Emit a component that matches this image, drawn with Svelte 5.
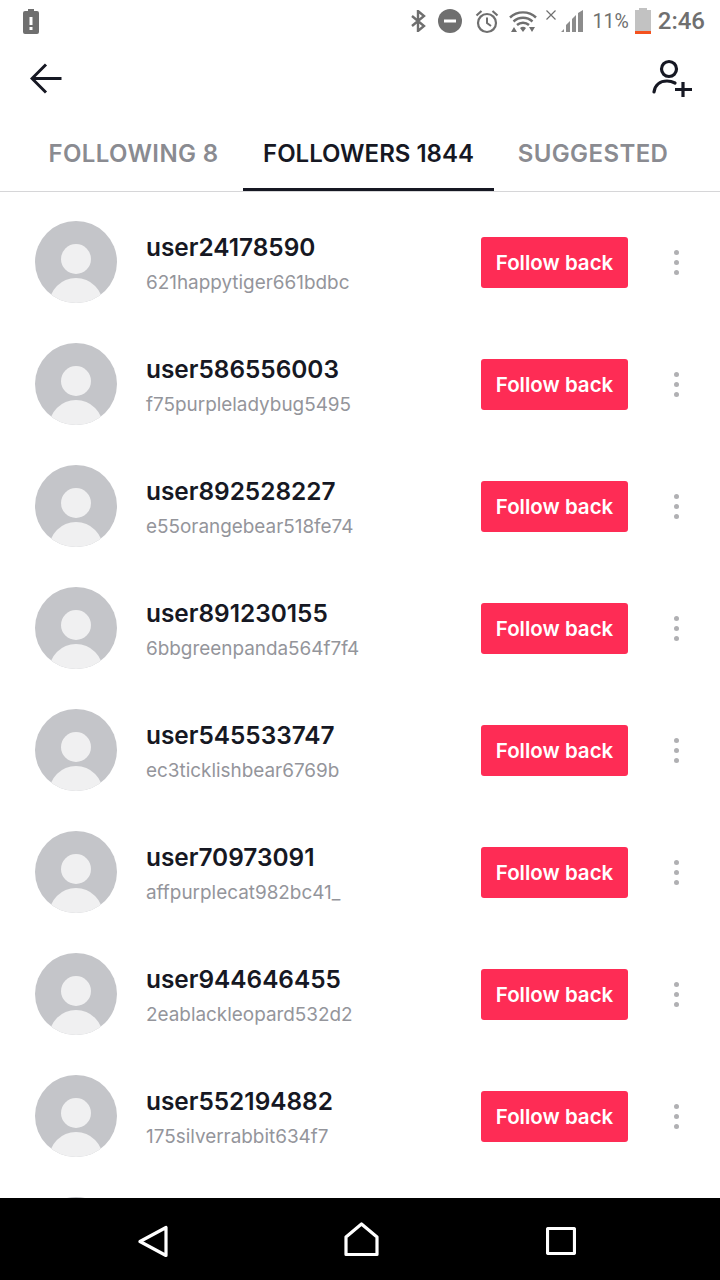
<script>
  const followers = [
    { name: 'user24178590', handle: '621happytiger661bdbc' },
    { name: 'user586556003', handle: 'f75purpleladybug5495' },
    { name: 'user892528227', handle: 'e55orangebear518fe74' },
    { name: 'user891230155', handle: '6bbgreenpanda564f7f4' },
    { name: 'user545533747', handle: 'ec3ticklishbear6769b' },
    { name: 'user70973091', handle: 'affpurplecat982bc41_' },
    { name: 'user944646455', handle: '2eablackleopard532d2' },
    { name: 'user552194882', handle: '175silverrabbit634f7' },
    {} // next row, only the top of its avatar shows above the nav bar
  ];
</script>

<div class="page">
  <div class="status">
    <svg class="alert" width="16" height="26" viewBox="0 0 16 26">
      <path d="M5 1h6v2h3a2 2 0 0 1 2 2v19a2 2 0 0 1-2 2H2a2 2 0 0 1-2-2V5a2 2 0 0 1 2-2h3z" fill="#6f6f6f"/>
      <rect x="6.500" y="9" width="3" height="8" fill="#fff"/>
      <rect x="6.500" y="19" width="3" height="3" fill="#fff"/>
    </svg>
    <div class="status-right">
      <svg class="bt" width="16" height="22" viewBox="0 0 16 22">
        <path d="M2 6l12 10-6 5V1l6 5L2 16" fill="none" stroke="#6f6f6f" stroke-width="2.400"/>
      </svg>
      <svg class="dnd" width="24" height="24" viewBox="0 0 24 24">
        <circle cx="12" cy="12" r="12" fill="#6f6f6f"/>
        <rect x="6" y="10.500" width="12" height="3" fill="#fff"/>
      </svg>
      <svg class="alarm" width="24" height="25" viewBox="0 0 24 25">
        <circle cx="12" cy="14" r="9" fill="none" stroke="#6f6f6f" stroke-width="2.200"/>
        <path d="M12 8.500V14l4 3" fill="none" stroke="#6f6f6f" stroke-width="2"/>
        <path d="M1.500 6.500L6.500 2M22.500 6.500L17.500 2" fill="none" stroke="#6f6f6f" stroke-width="2.200"/>
      </svg>
      <svg class="wifi" width="28" height="23" viewBox="0 0 28 23">
        <path d="M1 7.500a19 19 0 0 1 26 0M4.500 11.500a14 14 0 0 1 19 0M8 15a9 9 0 0 1 12 0" fill="none" stroke="#6f6f6f" stroke-width="2.400"/>
        <path d="M11 18a4.500 4.500 0 0 1 6 0l-3 4z" fill="#6f6f6f"/>
        <path d="M2 22l3-5 3 5zM20 17h6l-3 5z" fill="#6f6f6f"/>
      </svg>
      <div class="signal-group">
        <svg class="cross" width="10" height="10" viewBox="0 0 10 10">
          <path d="M.5.5l9 9M9.500.5l-9 9" stroke="#6f6f6f" stroke-width="1.200"/>
        </svg>
        <svg class="signal" width="23" height="22" viewBox="0 0 23 22">
          <path d="M0 22l3-3v3zM5 22v-7l4-4v11zM11 22V9l4-4v17zM17 22V3l5-3v22z" fill="#8c8c8c"/>
        </svg>
      </div>
      <span class="percent">11%</span>
      <svg class="battery" width="16" height="26" viewBox="0 0 16 26">
        <path d="M4 0h8v2h4v21H0V2h4z" fill="#c2c2c2"/>
        <rect y="23" width="16" height="3" fill="#f4511e"/>
      </svg>
      <span class="time">2:46</span>
    </div>
  </div>

  <div class="toolbar">
    <svg width="32" height="31" viewBox="0 0 32 31">
      <path d="M31.500 15.500H2M16 1.500L2 15.500l14 14" fill="none" stroke="#161823" stroke-width="3"/>
    </svg>
    <svg width="41" height="38" viewBox="0 0 41 38">
      <circle cx="17" cy="10" r="7.500" fill="none" stroke="#161823" stroke-width="3.200"/>
      <path d="M2 33c1-7 6-11 13-11 3 0 6 1 8 2" fill="none" stroke="#161823" stroke-width="3.200" stroke-linecap="round"/>
      <path d="M31 23v15M23 30.500h17" fill="none" stroke="#161823" stroke-width="3.200"/>
    </svg>
  </div>

  <div class="tabs">
    <div class="tab first">FOLLOWING 8</div>
    <div class="tab active">FOLLOWERS 1844</div>
    <div class="tab last">SUGGESTED</div>
  </div>

  <div class="list">
    {#each followers as f}
      <div class="row">
        <svg class="avatar" width="82" height="82" viewBox="0 0 82 82">
          <defs>
            <clipPath id="avatar-clip"><circle cx="41" cy="41" r="41"/></clipPath>
          </defs>
          <circle cx="41" cy="41" r="41" fill="#c4c5c9"/>
          <circle cx="41" cy="38" r="15" fill="#f0f0f1"/>
          <circle cx="41" cy="84" r="27" fill="#f0f0f1" clip-path="url(#avatar-clip)"/>
        </svg>
        {#if f.name}
          <div class="info">
            <div class="name">{f.name}</div>
            <div class="handle">{f.handle}</div>
          </div>
          <button class="follow">Follow back</button>
          <div class="more"><i></i><i></i><i></i></div>
        {/if}
      </div>
    {/each}
  </div>

  <div class="nav">
    <svg width="30" height="33" viewBox="0 0 30 33">
      <path d="M28 2.500v28L2 16.500z" fill="none" stroke="#fff" stroke-width="3.200" stroke-linejoin="round"/>
    </svg>
    <svg class="home" width="35" height="35" viewBox="0 0 35 35">
      <path d="M2 32.500V15L17.500 2 33 15v17.500z" fill="none" stroke="#fff" stroke-width="3.200" stroke-linejoin="round"/>
    </svg>
    <svg class="square" width="30" height="28" viewBox="0 0 30 28">
      <rect x="1.500" y="1.500" width="27" height="25" rx="1" fill="none" stroke="#fff" stroke-width="3.200"/>
    </svg>
  </div>
</div>

<style>
  :global(body) {
    background: #fff;
  }

  .page {
    width: 720px;
    height: 1280px;
    display: flex;
    flex-direction: column;
    overflow: hidden;
    background: #fff;
    font-family: 'Inter', 'Liberation Sans', sans-serif;
    color: #161823;
  }

  .status {
    height: 40px;
    flex: none;
    box-sizing: border-box;
    padding: 2px 15px 0 23px;
    display: flex;
    align-items: center;
    justify-content: space-between;
  }

  .status-right {
    display: flex;
    align-items: center;
  }

  .bt { margin-right: 12px; }
  .dnd { margin-right: 13px; }
  .alarm { margin-right: 10px; }
  .wifi { margin-right: 9px; }

  .signal-group {
    display: flex;
    align-items: flex-start;
    gap: 5px;
    margin-right: 9px;
  }

  .percent {
    font-family: 'Roboto', sans-serif;
    font-size: 19.500px;
    color: #6f6f6f;
    margin-right: 6px;
  }

  .time {
    font-family: 'Roboto', sans-serif;
    font-size: 24px;
    font-weight: 500;
    color: #6f6f6f;
    margin-left: 7px;
  }

  .toolbar {
    height: 75px;
    flex: none;
    display: flex;
    align-items: center;
    justify-content: space-between;
    padding: 1px 27px 0 30px;
    box-sizing: border-box;
  }

  .tabs {
    height: 77px;
    flex: none;
    box-sizing: border-box;
    display: flex;
    justify-content: center;
    border-bottom: 1px solid #d6d6d8;
  }

  .tab {
    height: 76px;
    box-sizing: border-box;
    display: flex;
    align-items: center;
    justify-content: center;
    font-size: 24px;
    font-weight: 600;
    color: #8a8b91;
    letter-spacing: 0.4px;
    white-space: nowrap;
  }

  .tab.first { width: 243px; padding-left: 24px; }
  .tab.last { width: 226px; padding-right: 28px; }

  .tab.active {
    width: 251px;
    color: #161823;
    letter-spacing: 0;
    border-bottom: 3px solid #161823;
    padding-top: 3px;
  }

  .list {
    flex: 1;
    min-height: 0;
    overflow: hidden;
    padding-top: 9px;
  }

  .row {
    height: 122px;
    display: flex;
    align-items: center;
    padding-left: 35px;
  }

  .avatar {
    flex: none;
    margin-right: 29px;
  }

  .info {
    width: 335px;
    flex: none;
    padding-top: 3px;
    box-sizing: border-box;
  }

  .name {
    font-size: 24.400px;
    font-weight: 600;
    line-height: 30px;
  }

  .handle {
    font-size: 18.900px;
    color: #94959b;
    line-height: 26px;
    margin-top: 8px;
  }

  .follow {
    width: 147px;
    height: 51px;
    flex: none;
    border: 0;
    border-radius: 3px;
    background: #fe2c55;
    color: #fff;
    font-family: inherit;
    font-size: 20.500px;
    font-weight: 600;
    padding: 0;
  }

  .more {
    display: flex;
    flex-direction: column;
    gap: 5px;
    margin-left: 46px;
  }

  .more i {
    display: block;
    width: 5px;
    height: 5px;
    border-radius: 50%;
    background: #b0b0b3;
  }

  .nav {
    height: 82px;
    flex: none;
    box-sizing: border-box;
    background: #000;
    position: relative;
    z-index: 1;
    display: flex;
    align-items: center;
    padding: 4px 0 0 138px;
  }

  .home { margin-left: 176px; margin-top: -4px; }
  .square { margin-left: 167px; }
</style>
